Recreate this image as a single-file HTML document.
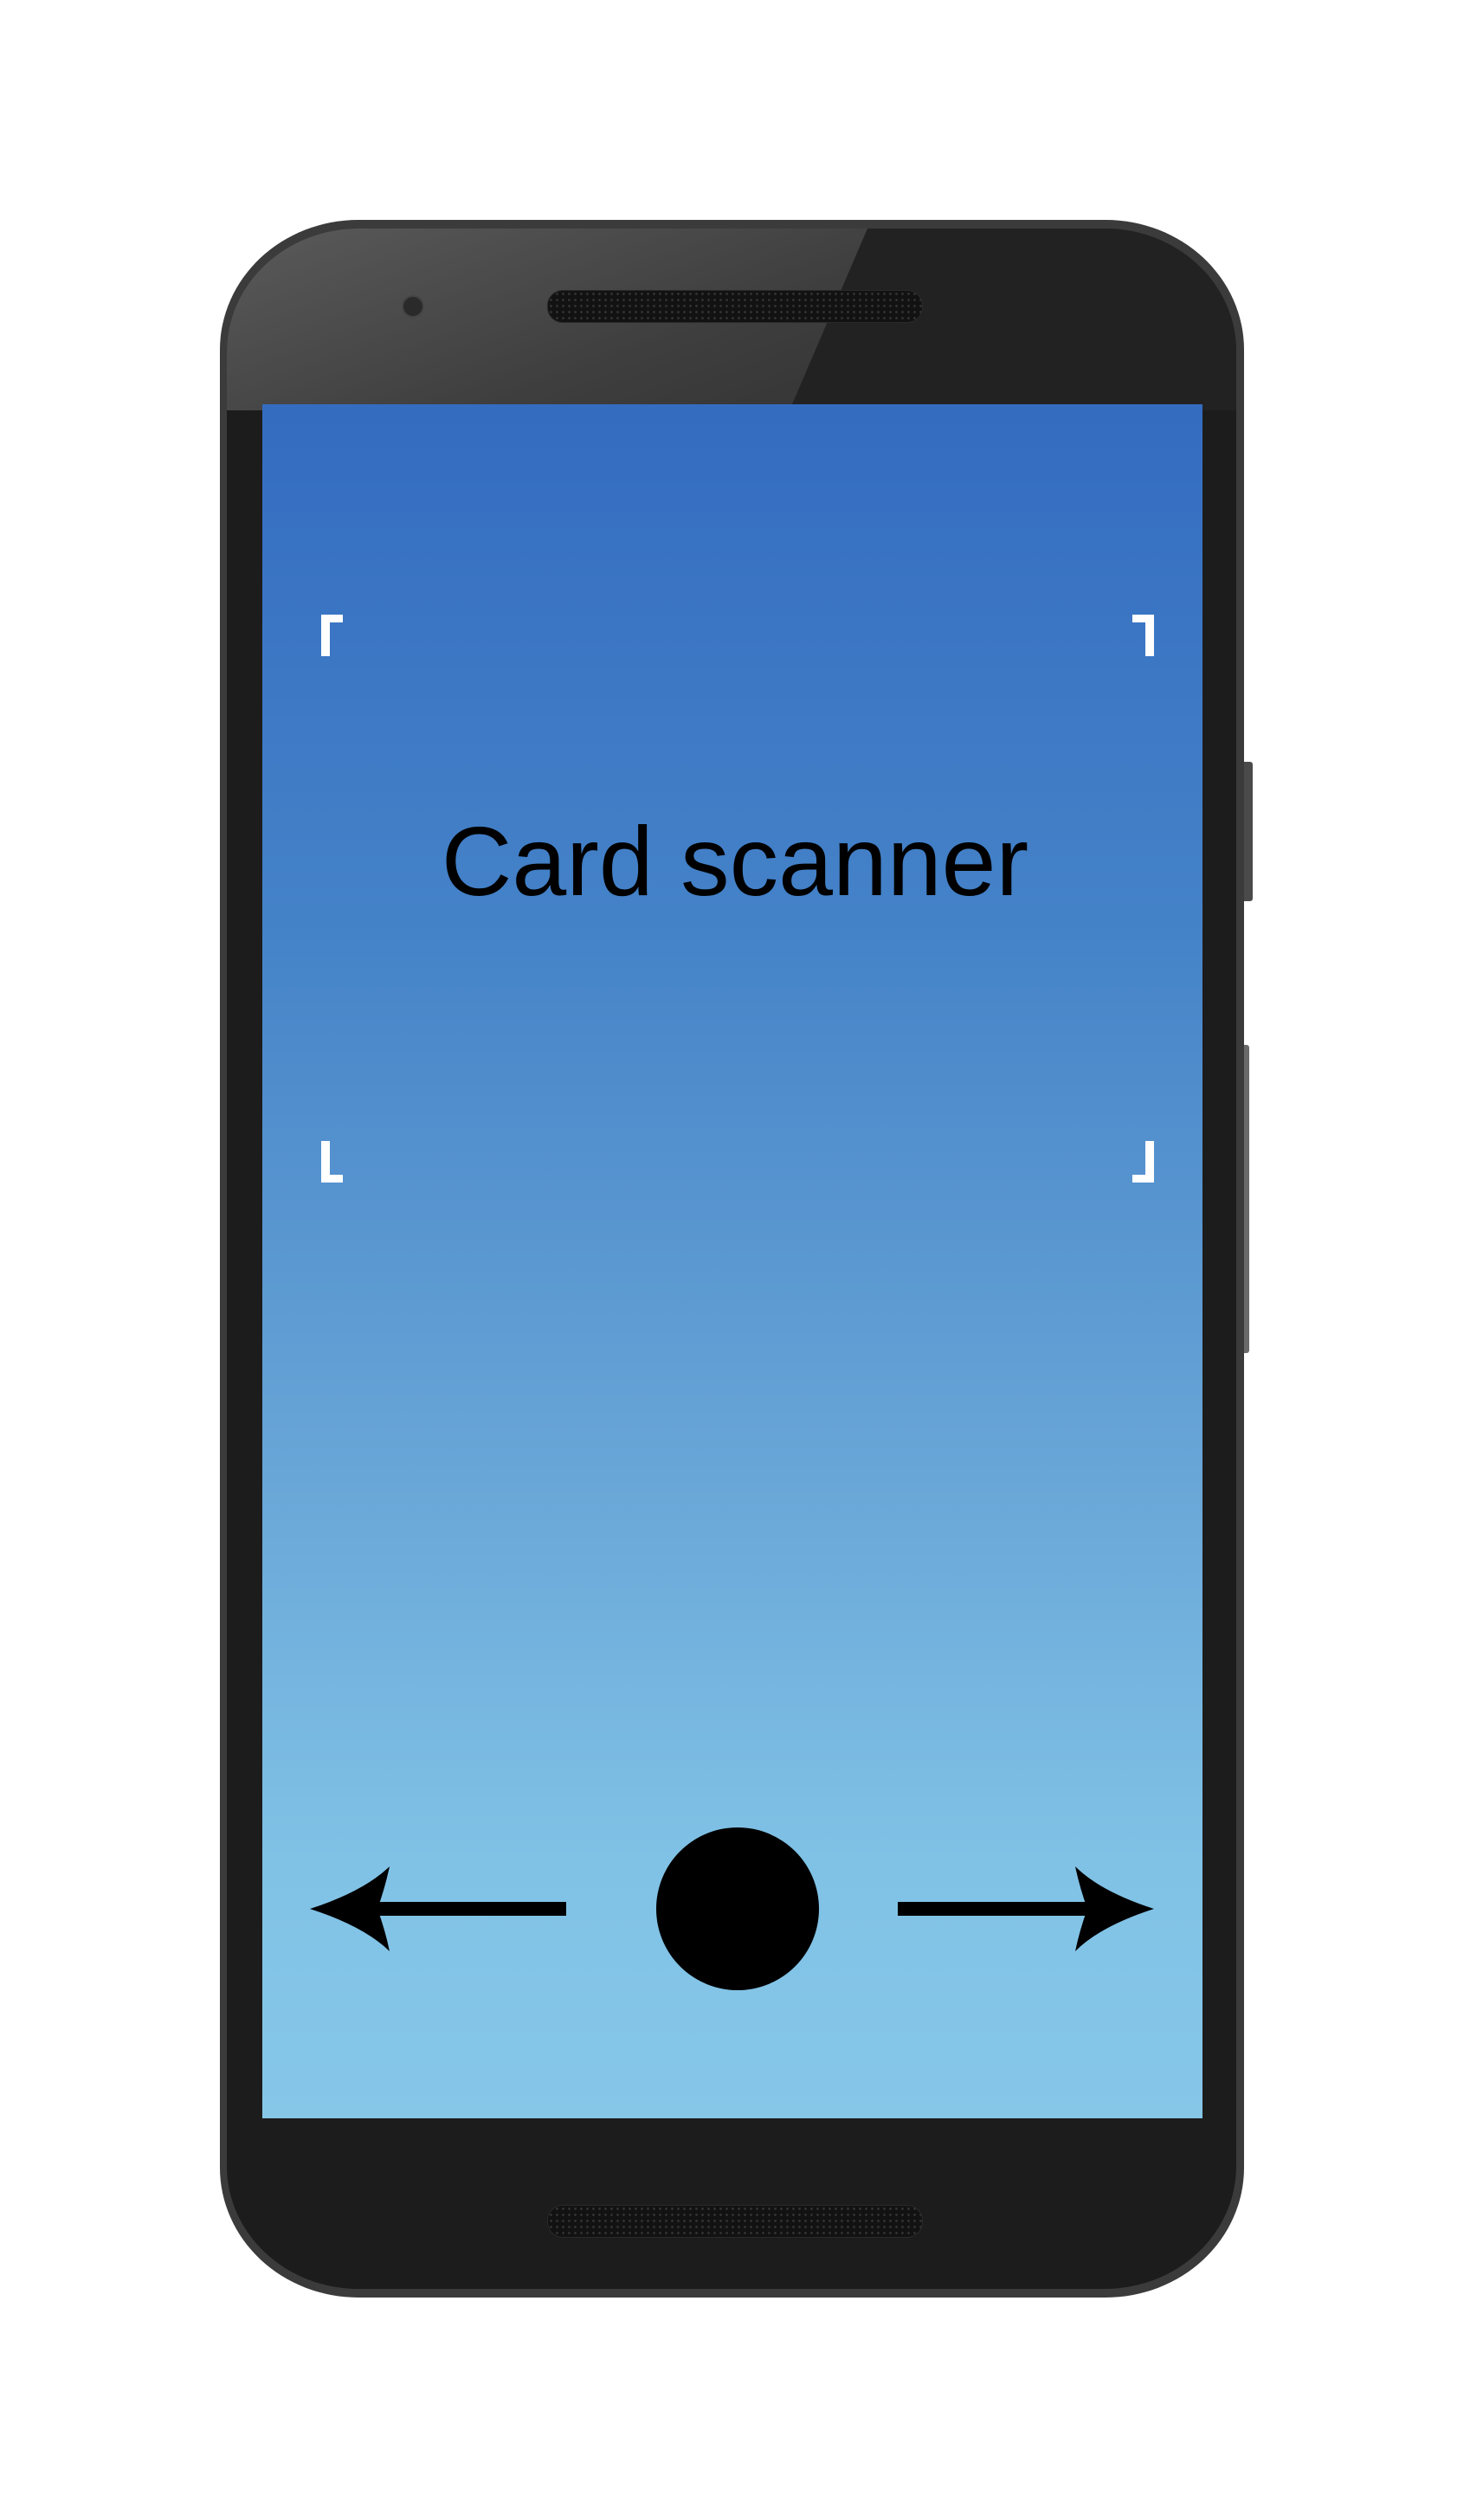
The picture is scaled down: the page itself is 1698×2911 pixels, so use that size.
<!DOCTYPE html>
<html><head><meta charset="utf-8"><style>
html,body{margin:0;padding:0;background:#fff;}
body{width:1698px;height:2911px;position:relative;overflow:hidden;}
.abs{position:absolute;}
.phone{left:254px;top:254px;width:1183px;height:2400px;border-radius:160px/150px;background:#3b3b3b;}
.face{left:262px;top:264px;width:1166px;height:2380px;border-radius:152px/142px;background:#1c1c1c;overflow:hidden;}
.glare{left:0;top:0;width:1166px;height:210px;background:linear-gradient(160deg,#5a5a5a 0%,#3e3e3e 50%,#2c2c2c 100%);clip-path:polygon(0 0,740px 0,650px 210px,0 210px);}
.darktop{left:0;top:0;width:1166px;height:210px;background:#222;}
.screen{left:303px;top:467px;width:1086px;height:1980px;background:linear-gradient(#346cc0 0%,#4482c8 30%,#66a3d6 60%,#80c2e6 85%,#86c7e8 100%);}
.spk{width:432px;height:36px;border-radius:18px;border:1px solid #2a2a2a;
background-image:radial-gradient(circle,#333 1.2px,transparent 1.6px);background-size:7px 7px;background-color:#121212;}
.br{background:#fff;}
</style></head><body>
<div class="abs" style="left:1430px;top:880px;width:17px;height:161px;border-radius:3px;background:#4a4a4a;"></div>
<div class="abs" style="left:1430px;top:1207px;width:13px;height:356px;border-radius:3px;background:#6a6a6a;"></div>
<div class="abs phone"></div>
<div class="abs face">
  <div class="abs darktop"></div>
  <div class="abs glare"></div>
</div>
<div class="abs spk" style="left:632px;top:335px;"></div>
<div class="abs spk" style="left:632px;top:2547px;"></div>
<div class="abs" style="left:464px;top:341px;width:22px;height:22px;border-radius:50%;background:#2a2a2a;border:2px solid #444;"></div>
<div class="abs screen"></div>
<div class="abs br" style="left:371px;top:710px;width:10px;height:48px;"></div>
<div class="abs br" style="left:371px;top:710px;width:25px;height:9px;"></div>
<div class="abs br" style="left:1323px;top:710px;width:10px;height:48px;"></div>
<div class="abs br" style="left:1308px;top:710px;width:25px;height:9px;"></div>
<div class="abs br" style="left:371px;top:1318px;width:10px;height:48px;"></div>
<div class="abs br" style="left:371px;top:1357px;width:25px;height:9px;"></div>
<div class="abs br" style="left:1323px;top:1318px;width:10px;height:48px;"></div>
<div class="abs br" style="left:1308px;top:1357px;width:25px;height:9px;"></div>
<div class="abs" style="left:349px;top:930px;width:1000px;text-align:center;font-family:'Liberation Sans',Arial,sans-serif;font-size:113px;line-height:130px;color:#000;">Card scanner</div>
<svg class="abs" style="left:0;top:0" width="1698" height="2911">
  <rect x="420" y="2197" width="234" height="16" fill="#000"/>
  <path d="M358 2205 Q420 2185 450 2156 Q445 2180 436 2205 Q445 2230 450 2254 Q420 2225 358 2205 Z" fill="#000"/>
  <rect x="1037" y="2197" width="240" height="16" fill="#000"/>
  <path d="M1333 2205 Q1271 2185 1242 2156 Q1247 2180 1256 2205 Q1247 2230 1242 2254 Q1271 2225 1333 2205 Z" fill="#000"/>
  <circle cx="852" cy="2205" r="94" fill="#000"/>
</svg>
</body></html>
